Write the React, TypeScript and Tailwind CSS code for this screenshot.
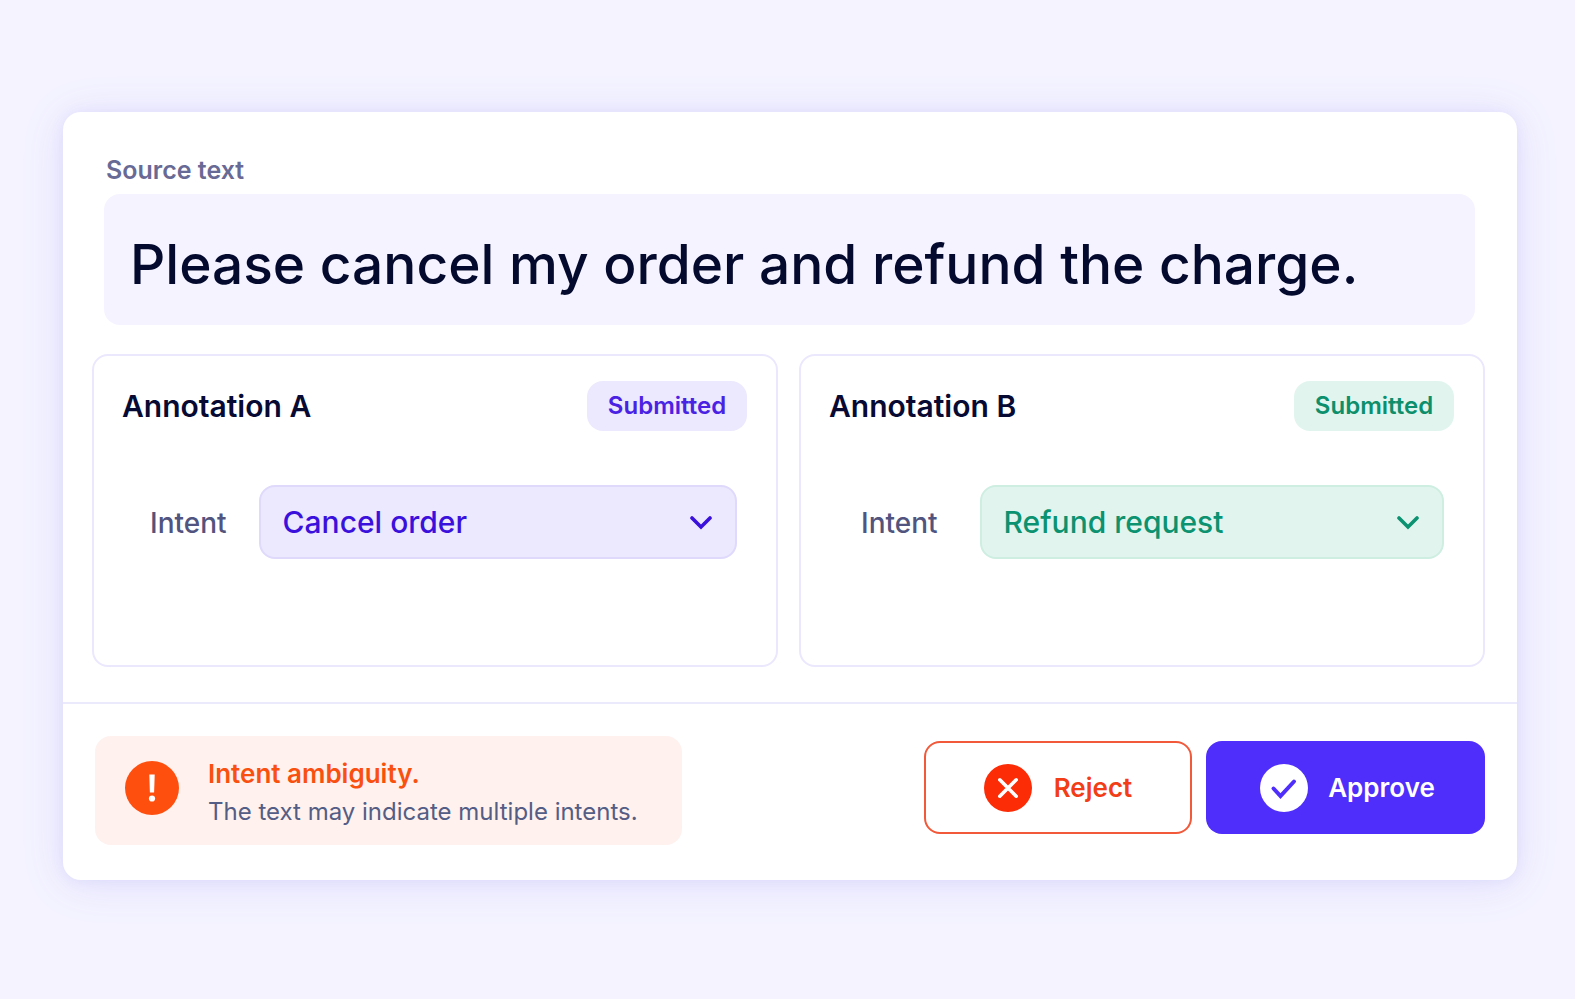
import React, { useState } from 'react';
import clsx from 'clsx';

type Tone = 'violet' | 'green';

interface Annotation {
  id: string;
  title: string;
  status: string;
  intent: string;
  tone: Tone;
}

const INTENTS = ['Cancel order', 'Refund request'];

const ANNOTATIONS: Annotation[] = [
  { id: 'a', title: 'Annotation A', status: 'Submitted', intent: 'Cancel order', tone: 'violet' },
  { id: 'b', title: 'Annotation B', status: 'Submitted', intent: 'Refund request', tone: 'green' },
];

const AnnotationPanel: React.FC<{ annotation: Annotation }> = ({ annotation }) => {
  const [intent, setIntent] = useState(annotation.intent);
  const isViolet = annotation.tone === 'violet';
  const fieldId = `intent-${annotation.id}`;

  return (
    <section className="flex-1 min-w-0 rounded-2xl border-2 border-[#ebe8fd] pt-[25px] pb-[106px]">
      <div className="flex items-center justify-between pr-[29px] pl-7">
        <h2 className="text-[30px] leading-10 font-semibold text-[#070a33]">{annotation.title}</h2>
        <span
          className={clsx(
            'flex h-[50px] w-40 items-center justify-center rounded-2xl text-[24px] font-semibold',
            isViolet ? 'bg-[#ece8fd] text-[#4a22e4]' : 'bg-[#e1f5ee] text-[#0b8f6c]'
          )}
        >
          {annotation.status}
        </span>
      </div>

      <div className={clsx('mt-[54px] flex items-center pr-[39px]', isViolet ? 'gap-8 pl-14' : 'gap-[42px] pl-[60px]')}>
        <label htmlFor={fieldId} className="pt-0.5 text-[28px] leading-8 font-medium text-[#50547f]">
          Intent
        </label>
        <div className="relative flex-1">
          <select
            id={fieldId}
            value={intent}
            onChange={e => setIntent(e.target.value)}
            className={clsx(
              'block h-[74px] w-full appearance-none rounded-2xl border-2 pl-[22px] pr-16 text-[30px] font-medium outline-none',
              isViolet ? 'border-[#dfd9fb] bg-[#ece8fd] text-[#3a10dc]' : 'border-[#ceeee2] bg-[#e1f5ee] text-[#0b9270]'
            )}
          >
            {INTENTS.map(name => (
              <option key={name}>{name}</option>
            ))}
          </select>
          <svg
            viewBox="0 0 24 14"
            className={clsx(
              'pointer-events-none absolute top-[31px] right-6 h-[14px] w-6',
              isViolet ? 'text-[#3a10dc]' : 'text-[#0b9270]'
            )}
            fill="none"
            stroke="currentColor"
            strokeWidth="3.6"
            strokeLinecap="round"
            strokeLinejoin="miter"
          >
            <path d="M3 2 12 11l9-9" />
          </svg>
        </div>
      </div>
    </section>
  );
};

const App: React.FC = () => {
  return (
    <div className="min-h-screen bg-[#f4f3ff] pt-28 pr-[58px] pb-16 pl-[63px] font-['Inter','Liberation_Sans',sans-serif]">
      <main className="rounded-[18px] bg-white shadow-[0_4px_44px_rgba(99,95,235,0.13),0_1px_14px_rgba(99,95,235,0.09)]">
        <div className="pt-[42px] pr-8 pb-[35px] pl-[29px]">
          {/* Source text */}
          <h1 className="pl-3.5 text-[25px] leading-8 font-semibold text-[#686a96]">Source text</h1>
          <div className="mt-2 mr-2.5 ml-3 rounded-2xl bg-[#f5f3ff] px-[26px] pt-[34px] pb-[25px]">
            <p className="text-[55px] leading-[72px] font-medium whitespace-nowrap text-[#040a2d]">
              Please cancel my order and refund the charge.
            </p>
          </div>

          {/* Annotations */}
          <div className="mt-[29px] flex gap-[21px]">
            {ANNOTATIONS.map(annotation => (
              <AnnotationPanel key={annotation.id} annotation={annotation} />
            ))}
          </div>
        </div>

        {/* Footer */}
        <footer className="flex items-center justify-between border-t-2 border-[#ebe9fc] pt-8 pr-8 pb-[35px] pl-8">
          <div role="alert" className="flex h-[109px] w-[587px] items-center gap-[29px] rounded-2xl bg-[#fff1ee] pl-[30px]">
            <svg viewBox="0 0 54 54" className="mb-1.5 h-[54px] w-[54px] shrink-0">
              <circle cx="27" cy="27" r="27" fill="#ff4f0f" />
              <path d="M24.3 13.5h5.4l-.6 18h-4.2z" fill="#fff" />
              <circle cx="27" cy="37.5" r="3.1" fill="#fff" />
            </svg>
            <div className="pt-1">
              <p className="text-[26px] leading-[38px] font-semibold text-[#f9500f]">Intent ambiguity.</p>
              <p className="text-[24px] leading-[38px] whitespace-nowrap text-[#535d85]">
                The text may indicate multiple intents.
              </p>
            </div>
          </div>

          <div className="flex gap-3.5 pb-1.5">
            <button className="flex h-[93px] w-[268px] items-center justify-center gap-[22px] rounded-2xl border-2 border-[#f2593a] bg-white text-[26px] font-semibold text-[#f23d16]">
              <svg viewBox="0 0 48 48" className="h-12 w-12">
                <circle cx="24" cy="24" r="24" fill="#fb2c06" />
                <path d="m15.8 15.8 16.4 16.4M32.2 15.8 15.8 32.2" stroke="#fff" strokeWidth="3.6" strokeLinecap="round" />
              </svg>
              Reject
            </button>
            <button className="flex h-[93px] w-[279px] items-center justify-center gap-5 rounded-2xl bg-[#4f2dfb] pl-1 text-[26px] font-semibold text-white">
              <svg viewBox="0 0 48 48" className="h-12 w-12">
                <circle cx="24" cy="24" r="24" fill="#fff" />
                <path
                  d="m13.5 24.5 7 7.5L34 17.5"
                  fill="none"
                  stroke="#4f2dfb"
                  strokeWidth="4"
                  strokeLinecap="round"
                  strokeLinejoin="miter"
                />
              </svg>
              Approve
            </button>
          </div>
        </footer>
      </main>
    </div>
  );
};

export default App;
